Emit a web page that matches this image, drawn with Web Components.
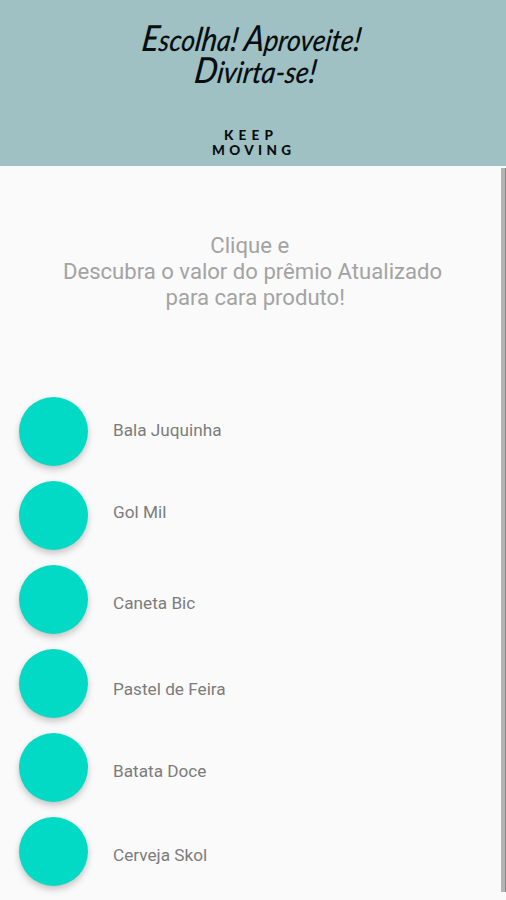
<!DOCTYPE html>
<html lang="pt-BR">
<head>
<meta charset="utf-8">
<title>Keep Moving</title>
<style>
  body { margin: 0; background: #fafafa; font-family: Roboto, sans-serif; }
</style>
</head>
<body>
<prize-app>
  <prize-banner slot="header"></prize-banner>
  <prize-hint>Clique e 
Descubra o valor do prêmio Atualizado
 para cara produto!</prize-hint>
  <prize-item style="--label-top: 23px">Bala Juquinha</prize-item>
  <prize-item style="--label-top: 21px">Gol Mil</prize-item>
  <prize-item style="--label-top: 28px">Caneta Bic</prize-item>
  <prize-item style="--label-top: 30px">Pastel de Feira</prize-item>
  <prize-item style="--label-top: 28px">Batata Doce</prize-item>
  <prize-item style="--label-top: 28px">Cerveja Skol</prize-item>
</prize-app>

<script>
class PrizeBanner extends HTMLElement {
  constructor() {
    super();
    this.attachShadow({ mode: "open" });
    this.shadowRoot.innerHTML = `
      <style>
        :host { display: block; height: 166px; background: #9fc1c3; }
        svg { display: block; }
        .script {
          font-family: Lato, sans-serif;
          font-style: italic;
          font-weight: 500;
          font-size: 30px;
        }
        .cap { font-size: 36px; }
        .tall { font-size: 33px; }
        .brand { font-family: Lato, sans-serif; font-weight: 900; font-size: 13.5px; }
      </style>
      <svg width="506" height="166" fill="#080d0f">
        <g class="script" transform="skewX(-8)">
          <text x="148" y="51" textLength="219" lengthAdjust="spacingAndGlyphs"><tspan class="cap">E</tspan>sco<tspan class="tall">lh</tspan>a<tspan class="tall">!</tspan> <tspan class="cap">A</tspan>proveite<tspan class="tall">!</tspan></text>
          <text x="205" y="83" textLength="122" lengthAdjust="spacingAndGlyphs"><tspan class="cap">D</tspan>ivirta-se<tspan class="tall">!</tspan></text>
        </g>
        <g class="brand">
          <text x="224" y="140" textLength="49">KEEP</text>
          <text x="212" y="155" textLength="79">MOVING</text>
        </g>
      </svg>
    `;
  }
}

class PrizeHint extends HTMLElement {
  constructor() {
    super();
    this.attachShadow({ mode: "open" });
    // no whitespace around the slot: the host keeps line breaks
    this.shadowRoot.innerHTML = `<style>
        :host {
          display: block;
          margin: 66px 0 87px 4px;
          color: #a3a3a3;
          font-size: 22.1px;
          line-height: 26px;
          text-align: center;
          white-space: pre;
        }
      </style><slot></slot>`;
  }
}

class PrizeItem extends HTMLElement {
  constructor() {
    super();
    this.attachShadow({ mode: "open" });
    this.shadowRoot.innerHTML = `
      <style>
        :host {
          display: flex;
          gap: 25px;
          height: 69px;
          margin: 0 0 15px 19px;
        }
        button {
          flex: none;
          width: 69px;
          height: 69px;
          padding: 0;
          border: 0;
          border-radius: 50%;
          background: #03dac5;
          box-shadow: 0 4px 7px rgba(0, 0, 0, .18), 0 1px 5px rgba(0, 0, 0, .06);
        }
        .label {
          margin-top: var(--label-top, 24px);
          color: #7c7c7c;
          font-size: 17.2px;
          line-height: 20px;
        }
      </style>
      <button type="button"></button>
      <span class="label"><slot></slot></span>
    `;
  }
}

class PrizeApp extends HTMLElement {
  constructor() {
    super();
    this.attachShadow({ mode: "open" });
    this.shadowRoot.innerHTML = `
      <style>
        :host {
          display: flex;
          flex-direction: column;
          box-sizing: border-box;
          height: 900px;
          overflow: hidden;
        }
        .view { display: flex; flex: 1; min-height: 0; }
        .content { flex: 1; min-width: 0; }
        /* scroll indicator */
        .thumb {
          width: 5px;
          margin: 2px 0 8px;
          background: linear-gradient(90deg, #b4b4b4 0 4px, #858585 4px);
        }
      </style>
      <slot name="header"></slot>
      <div class="view">
        <div class="content"><slot></slot></div>
        <div class="thumb"></div>
      </div>
    `;
  }
}

customElements.define("prize-banner", PrizeBanner);
customElements.define("prize-hint", PrizeHint);
customElements.define("prize-item", PrizeItem);
customElements.define("prize-app", PrizeApp);
</script>
</body>
</html>
